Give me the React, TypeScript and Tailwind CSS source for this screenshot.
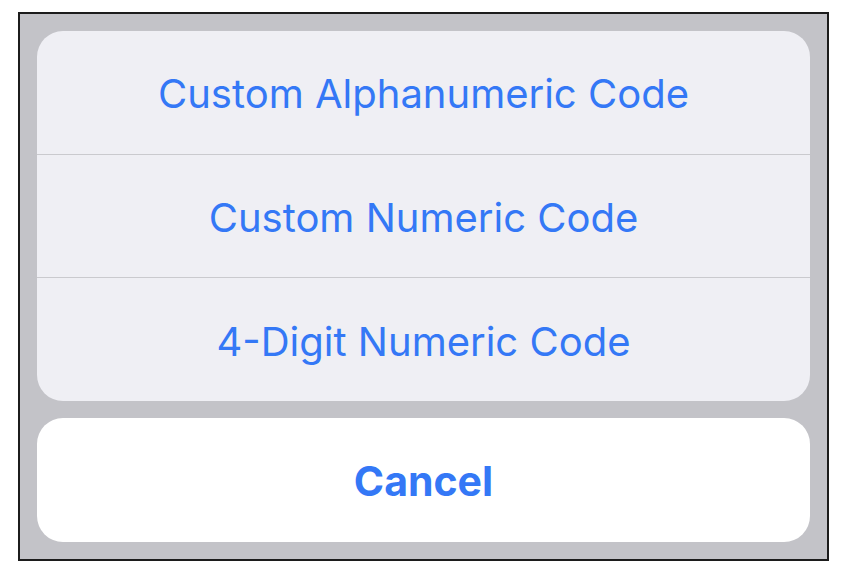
export default function App() {
  const rows = ["Custom Alphanumeric Code", "Custom Numeric Code", "4-Digit Numeric Code"];
  return (
    <div className="w-[843px] h-[569px] bg-white pl-[18px] pt-[12px]" style={{ fontFamily: "Inter, 'Noto Sans', sans-serif" }}>
      <div className="w-[811px] h-[549px] border-[2px] border-[#1c1c1c] bg-[#c3c3c8] p-[17px] flex flex-col gap-[17px]">
        <div className="h-[370px] rounded-[26px] bg-[#efeff4] flex flex-col overflow-hidden">
          {rows.map((r, i) => (
            <div
              key={r}
              className={`flex-1 flex items-center justify-center pt-[4px] text-[40px] text-[#3478f6] ${i > 0 ? "border-t border-[#cacace]" : ""}`}
            >
              {r}
            </div>
          ))}
        </div>
        <div className="h-[124px] rounded-[26px] bg-white flex items-center justify-center pt-[3px] text-[41px] font-bold text-[#3478f6]">
          Cancel
        </div>
      </div>
    </div>
  );
}
